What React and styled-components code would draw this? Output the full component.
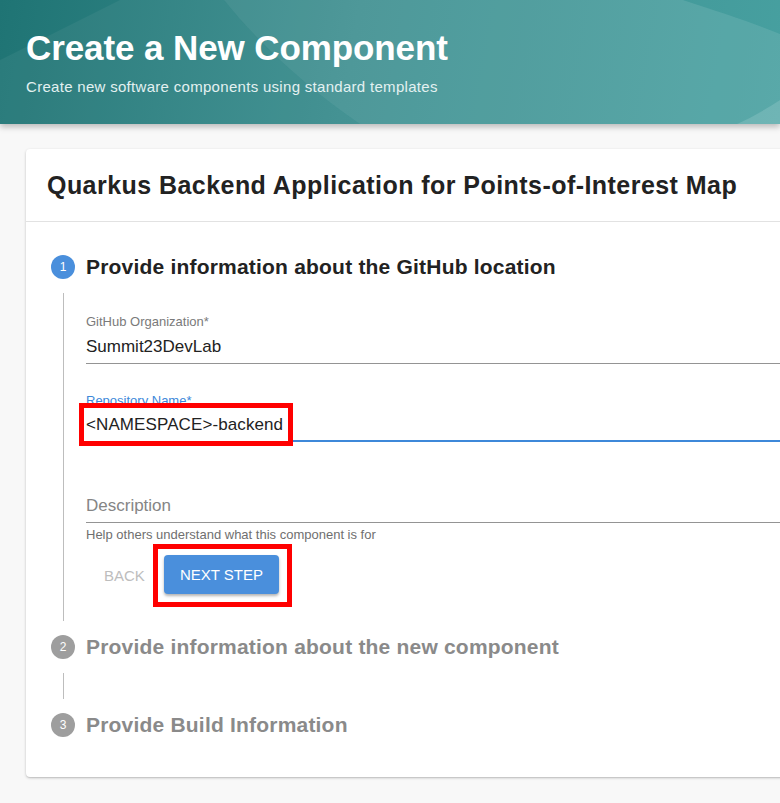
import React from "react";
import styled, { createGlobalStyle } from "styled-components";

const GlobalStyle = createGlobalStyle`
  html, body {
    margin: 0;
    padding: 0;
    background: #f8f8f8;
    font-family: "Liberation Sans", Arial, sans-serif;
    overflow: hidden;
  }
`;

const Page = styled.div`
  width: 780px;
  height: 803px;
  overflow: hidden;
  background: #f8f8f8;
`;

const Header = styled.header`
  position: relative;
  height: 124px;
  padding: 30px 26px 0;
  box-sizing: border-box;
  overflow: hidden;
  background: linear-gradient(100deg, #1f7474 0%, #3a8d8e 45%, #47a0a0 100%);
  box-shadow: 0 3px 6px rgba(0, 0, 0, 0.25);
  color: #fff;
`;

const HeaderArt = styled.svg`
  position: absolute;
  inset: 0;
  width: 100%;
  height: 100%;
`;

const HeaderText = styled.div`
  position: relative;
`;

const Title = styled.h1`
  margin: 0;
  font-size: 35px;
  font-weight: 700;
  line-height: 36px;
  letter-spacing: -0.1px;
`;

const Subtitle = styled.p`
  margin: 13px 0 0;
  font-size: 15px;
  line-height: 16px;
  letter-spacing: 0.3px;
  color: #e3f1f1;
`;

const Content = styled.main`
  padding: 25px 0 0 26px;
`;

const Card = styled.section`
  width: 790px;
  background: #fff;
  border-radius: 4px;
  box-shadow: 0 1px 3px rgba(0, 0, 0, 0.2), 0 1px 1px rgba(0, 0, 0, 0.08);
  padding-bottom: 40px;
`;

const CardHeader = styled.div`
  height: 72px;
  padding: 0 21px;
  display: flex;
  align-items: center;
  border-bottom: 1px solid #e2e2e2;
  font-size: 25px;
  font-weight: 700;
  letter-spacing: 0.45px;
  color: #222;
`;

const Steps = styled.div`
  padding: 33px 0 0 25px;
`;

const StepHead = styled.div`
  display: flex;
  align-items: center;
  gap: 11px;
  height: 24px;
`;

const StepIcon = styled.span`
  width: 24px;
  height: 24px;
  border-radius: 50%;
  background: ${(p) => (p.$active ? "#4a8fdc" : "#9e9e9e")};
  color: #fff;
  font-size: 12px;
  display: flex;
  align-items: center;
  justify-content: center;
`;

const StepLabel = styled.span`
  font-size: 21px;
  font-weight: 700;
  letter-spacing: 0.2px;
  color: ${(p) => (p.$active ? "#222" : "#8a8a8a")};
`;

const StepBody = styled.div`
  margin: 14px 0 14px 12px;
  border-left: 1px solid #bdbdbd;
  padding: 0 0 ${(p) => p.$bottom || 0}px 22px;
  min-height: ${(p) => p.$min || 0}px;
`;

const Field = styled.div`
  position: relative;
  padding-top: ${(p) => p.$top}px;
`;

const FieldLabel = styled.label`
  display: block;
  font-size: 13px;
  line-height: 14px;
  color: ${(p) => (p.$focused ? "#3d88d9" : "#7a7a7a")};
`;

const FieldValue = styled.div`
  font-size: 17px;
  line-height: 20px;
  padding: 8px 0 ${(p) => (p.$focused ? 4 : 6)}px;
  color: ${(p) => (p.$placeholder ? "#858585" : "#222")};
  border-bottom: ${(p) => (p.$focused ? "2px solid #3d88d9" : "1px solid #949494")};
`;

const Highlight = styled.span`
  position: absolute;
  left: -7px;
  bottom: -4px;
  width: 214px;
  height: 43px;
  box-sizing: border-box;
  border: 5px solid #ff0000;
  background: #fff;
  display: flex;
  align-items: center;
  padding-left: 2px;
  font-size: 17px;
  letter-spacing: 0.1px;
  color: #222;
`;

const Helper = styled.div`
  font-size: 13px;
  line-height: 14px;
  color: #6f6f6f;
  margin-top: 5px;
`;

const Actions = styled.div`
  display: flex;
  align-items: center;
  margin-top: 2px;
  padding-left: 18px;
  gap: 6px;
`;

const BackButton = styled.button`
  border: none;
  background: none;
  font-family: inherit;
  font-size: 15px;
  color: #bdbdbd;
  padding: 0;
  width: 43px;
  text-align: left;
  text-transform: uppercase;
`;

const RedFrame = styled.div`
  border: 5px solid #ff0000;
  padding: 6px 8px 8px 6px;
  display: flex;
`;

const NextButton = styled.button`
  border: none;
  border-radius: 4px;
  background: #4a8fdc;
  color: #fff;
  font-family: inherit;
  font-size: 15px;
  width: 115px;
  height: 39px;
  box-shadow: 0 2px 3px rgba(0, 0, 0, 0.3);
`;

export default function App() {
  return (
    <Page>
      <GlobalStyle />
      <Header>
        <HeaderArt viewBox="0 0 780 124" preserveAspectRatio="none">
          <path d="M120 0 L224 0 C260 45 310 90 360 124 L0 124 L0 60 Z" fill="#ffffff" opacity="0.05" />
          <path d="M224 0 L683 0 C720 12 750 22 780 34 L780 100 C765 110 750 118 737 124 L360 124 C310 90 260 45 224 0 Z" fill="#ffffff" opacity="0.1" />
          <path d="M737 124 C750 118 765 110 780 100 L780 124 Z" fill="#ffffff" opacity="0.22" />
        </HeaderArt>
        <HeaderText>
          <Title>Create a New Component</Title>
          <Subtitle>Create new software components using standard templates</Subtitle>
        </HeaderText>
      </Header>
      <Content>
        <Card>
          <CardHeader>Quarkus Backend Application for Points-of-Interest Map</CardHeader>
          <Steps>
            <StepHead>
              <StepIcon $active>1</StepIcon>
              <StepLabel $active>Provide information about the GitHub location</StepLabel>
            </StepHead>
            <StepBody $bottom={14}>
              <Field $top={22}>
                <FieldLabel>GitHub Organization*</FieldLabel>
                <FieldValue>Summit23DevLab</FieldValue>
              </Field>
              <Field $top={30}>
                <FieldLabel $focused>Repository Name*</FieldLabel>
                <FieldValue $focused>&nbsp;</FieldValue>
                <Highlight>&lt;NAMESPACE&gt;-backend</Highlight>
              </Field>
              <Field $top={46}>
                <FieldValue $placeholder>Description</FieldValue>
              </Field>
              <Helper>Help others understand what this component is for</Helper>
              <Actions>
                <BackButton>Back</BackButton>
                <RedFrame>
                  <NextButton>NEXT STEP</NextButton>
                </RedFrame>
              </Actions>
            </StepBody>
            <StepHead>
              <StepIcon>2</StepIcon>
              <StepLabel>Provide information about the new component</StepLabel>
            </StepHead>
            <StepBody $min={26} />
            <StepHead>
              <StepIcon>3</StepIcon>
              <StepLabel>Provide Build Information</StepLabel>
            </StepHead>
          </Steps>
        </Card>
      </Content>
    </Page>
  );
}
